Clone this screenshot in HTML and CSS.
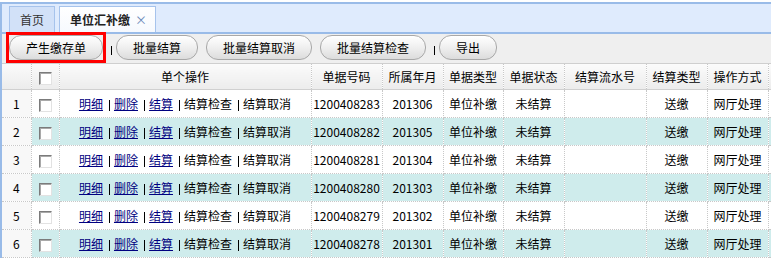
FILE: index.html
```html
<!DOCTYPE html>
<html lang="zh-CN">
<head>
    <meta charset="UTF-8">
    <title>单位汇补缴</title>
    <link rel="stylesheet" href="styles.css">
</head>
<body>
    <div class="panel">
        <div class="tabs">
            <div class="tab">首页</div>
            <div class="tab active">单位汇补缴<span class="tab-close">×</span></div>
        </div>
        <div class="toolbar">
            <span class="mark"><button class="btn">产生缴存单</button></span>
            <span class="sep"></span>
            <button class="btn">批量结算</button>
            <button class="btn">批量结算取消</button>
            <button class="btn">批量结算检查</button>
            <span class="sep"></span>
            <button class="btn">导出</button>
        </div>
        <table class="grid">
            <colgroup>
                <col style="width:29px">
                <col style="width:28px">
                <col style="width:252px">
                <col style="width:71px">
                <col style="width:61px">
                <col style="width:60px">
                <col style="width:61px">
                <col style="width:82px">
                <col style="width:61px">
                <col style="width:61px">
                <col style="width:60px">
            </colgroup>
            <thead>
                <tr>
                    <th class="rn"></th>
                    <th><span class="ck"></span></th>
                    <th>单个操作</th>
                    <th>单据号码</th>
                    <th>所属年月</th>
                    <th>单据类型</th>
                    <th>单据状态</th>
                    <th>结算流水号</th>
                    <th>结算类型</th>
                    <th>操作方式</th>
                    <th></th>
                </tr>
            </thead>
            <tbody id="rows"></tbody>
        </table>
    </div>
    <script>
        const rows = [
            ['1200408283', '201306'],
            ['1200408282', '201305'],
            ['1200408281', '201304'],
            ['1200408280', '201303'],
            ['1200408279', '201302'],
            ['1200408278', '201301']
        ];
        const bar = '<span class="bar"></span>';
        const tbody = document.getElementById('rows');
        rows.forEach((r, i) => {
            const tr = document.createElement('tr');
            if (i % 2 === 1) tr.className = 'alt';
            tr.innerHTML =
                '<td class="rn">' + (i + 1) + '</td>' +
                '<td><span class="ck"></span></td>' +
                '<td class="ops"><a href="#">明细</a>' + bar + '<a href="#">删除</a>' + bar +
                '<a href="#">结算</a>' + bar + '结算检查' + bar + '结算取消</td>' +
                '<td>' + r[0] + '</td>' +
                '<td>' + r[1] + '</td>' +
                '<td>单位补缴</td>' +
                '<td>未结算</td>' +
                '<td></td>' +
                '<td>送缴</td>' +
                '<td>网厅处理</td>' +
                '<td></td>';
            tbody.appendChild(tr);
        });
    </script>
</body>
</html>
```

FILE: styles.css
```css
html, body {
    overflow: hidden;
}

body {
    margin: 0;
    background: #fff;
    font-family: "Noto Sans CJK SC", "Liberation Sans", sans-serif;
    font-size: 12px;
    color: #000;
}

.panel {
    margin-top: 2px;
    border-left: 2px solid #99bbe8;
    overflow: hidden;
}

/* tab strip */
.tabs {
    display: flex;
    align-items: flex-end;
    height: 26px;
    padding: 2px 0 0 7px;
    background: #dfebfd;
    border-top: 2px solid #99bbe8;
    border-bottom: 2px solid #99bbe8;
}

.tab {
    height: 26px;
    box-sizing: border-box;
    padding: 0 10px;
    margin-right: 4px;
    line-height: 25px;
    color: #333;
    background: #d2e1f8;
    border: 1px solid #a6c3ec;
    border-bottom: none;
}

.tab.active {
    padding-right: 8px;
    background: linear-gradient(#fff, #f6f9fe);
    font-weight: bold;
    color: #222;
}

.tab-close {
    margin-left: 5px;
    font-weight: normal;
    color: #6a87b8;
}

/* toolbar */
.toolbar {
    display: flex;
    align-items: flex-start;
    height: 28px;
    padding: 1px 0 0 7px;
    background: #efefef;
    border-bottom: 1px solid #cfcfcf;
}

.btn {
    height: 25px;
    padding: 0 16px;
    margin-right: 8px;
    border: 1px solid #a8a8a8;
    border-radius: 12px;
    background: linear-gradient(#ffffff, #f1f1f1 45%, #dcdcdc);
    font-family: inherit;
    font-size: 12px;
    color: #000;
    cursor: pointer;
}

/* red highlight box round the first button */
.mark {
    display: flex;
    margin: -3px 5px 0 -3px;
    border: 3px solid #f00;
}

.mark .btn {
    margin: 0;
}

.sep {
    width: 1px;
    height: 9px;
    margin: 11px 4px 0 0;
    background: #000;
}

/* grid */
.grid {
    table-layout: fixed;
    width: 826px;
    border-collapse: collapse;
}

.grid th,
.grid td {
    padding: 0;
    text-align: center;
    white-space: nowrap;
    overflow: hidden;
    border-right: 1px dotted #c8c8c8;
    border-bottom: 1px dotted #c8c8c8;
}

.grid th {
    height: 25px;
    font-weight: normal;
    background: linear-gradient(#fbfbfb, #ececec);
    border-bottom: 1px solid #d0d0d0;
}

.grid td {
    height: 27px;
    background: #fff;
}

.grid tr.alt td {
    background: #cfecec;
}

.grid td.rn,
.grid tr.alt td.rn {
    background: #f8f8f8;
}

.ck {
    display: inline-block;
    width: 13px;
    height: 13px;
    box-sizing: border-box;
    vertical-align: middle;
    background: #fff;
    border: 1px solid;
    border-color: #7b7b7b #e2e2e2 #e2e2e2 #7b7b7b;
    box-shadow: inset 1px 1px #a9a9a9;
}

.ops a {
    color: #000080;
    text-decoration: underline;
}

.bar {
    display: inline-block;
    width: 1px;
    height: 11px;
    margin: 0 4px 0 6px;
    vertical-align: -2px;
    background: #000;
}
```
